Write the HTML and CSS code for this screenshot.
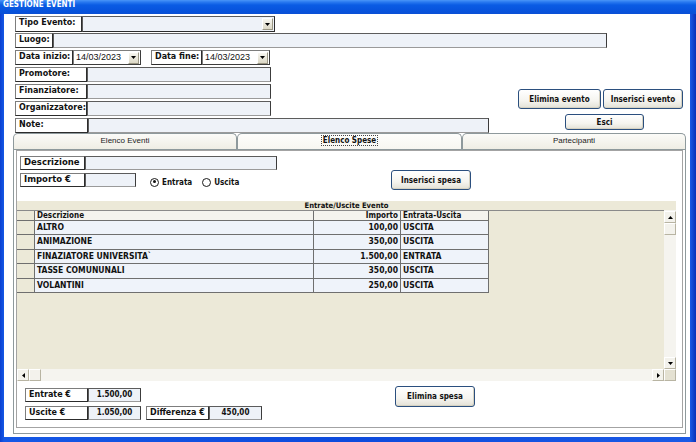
FILE: index.html
```html
<!DOCTYPE html>
<html lang="it">
<head>
<meta charset="utf-8">
<title>Gestione Eventi</title>
<link rel="stylesheet" href="styles.css">
</head>
<body>
<div class="window">
  <div class="titlebar">GESTIONE EVENTI</div>
  <div class="client">
    <div class="top">
      <div class="row row-first">
        <div class="lbl w67">Tipo Evento:</div>
        <div class="combo w193"><span class="arr"><svg width="5" height="3" viewBox="0 0 5 3"><path d="M0 0H5L2.5 3Z" fill="#000"/></svg></span></div>
      </div>
      <div class="row">
        <div class="lbl w38">Luogo:</div>
        <div class="inp w554"></div>
      </div>
      <div class="row">
        <div class="lbl w58">Data inizio:</div>
        <div class="date"><span class="dtxt">14/03/2023</span><span class="arr"><svg width="5" height="3" viewBox="0 0 5 3"><path d="M0 0H5L2.5 3Z" fill="#000"/></svg></span></div>
        <div class="lbl w51 gap10">Data fine:</div>
        <div class="date"><span class="dtxt">14/03/2023</span><span class="arr"><svg width="5" height="3" viewBox="0 0 5 3"><path d="M0 0H5L2.5 3Z" fill="#000"/></svg></span></div>
      </div>
      <div class="lower">
        <div class="lcol">
          <div class="row"><div class="lbl w72">Promotore:</div><div class="inp w184"></div></div>
          <div class="row"><div class="lbl w72">Finanziatore:</div><div class="inp w184"></div></div>
          <div class="row"><div class="lbl w72">Organizzatore:</div><div class="inp w184"></div></div>
          <div class="row"><div class="lbl w73">Note:</div><div class="inp w401"></div></div>
        </div>
        <div class="btncol">
          <div class="btnrow">
            <button class="btn b-elim">Elimina evento</button>
            <button class="btn b-ins">Inserisci evento</button>
          </div>
          <button class="btn b-esci">Esci</button>
        </div>
      </div>
    </div>

    <div class="tabs">
      <div class="tab">Elenco Eventi</div>
      <div class="tab sel"><span class="focus">Elenco Spese</span></div>
      <div class="tab">Partecipanti</div>
    </div>
    <div class="panel">
      <div class="inner">
        <div class="sform">
          <div class="scol">
            <div class="srow"><div class="lbl w65">Descrizione</div><div class="inp w192"></div></div>
            <div class="srow">
              <div class="lbl w65">Importo €</div><div class="inp w51"></div>
              <span class="radio on"></span><span class="rtxt">Entrata</span>
              <span class="radio"></span><span class="rtxt">Uscita</span>
            </div>
          </div>
          <button class="btn b-inssp">Inserisci spesa</button>
        </div>

        <div class="grid">
          <div class="gcap">Entrate/Uscite Evento</div>
          <div class="gbody">
            <div class="gtable">
              <div class="grow ghead">
                <div class="c ind"></div><div class="c cd">Descrizione</div><div class="c ci">Importo</div><div class="c ce">Entrata-Uscita</div>
              </div>
              <div class="grow"><div class="c ind"></div><div class="c cd">ALTRO</div><div class="c ci">100,00</div><div class="c ce">USCITA</div></div>
              <div class="grow"><div class="c ind"></div><div class="c cd">ANIMAZIONE</div><div class="c ci">350,00</div><div class="c ce">USCITA</div></div>
              <div class="grow"><div class="c ind"></div><div class="c cd">FINAZIATORE UNIVERSITA`</div><div class="c ci">1.500,00</div><div class="c ce">ENTRATA</div></div>
              <div class="grow"><div class="c ind"></div><div class="c cd">TASSE COMUNUNALI</div><div class="c ci">350,00</div><div class="c ce">USCITA</div></div>
              <div class="grow"><div class="c ind"></div><div class="c cd">VOLANTINI</div><div class="c ci">250,00</div><div class="c ce">USCITA</div></div>
            </div>
            <div class="vscroll">
              <span class="sbtn"><svg width="5" height="3" viewBox="0 0 5 3"><path d="M0 3H5L2.5 0Z" fill="#000"/></svg></span>
              <span class="sthumb"></span>
              <span class="vfill"></span>
              <span class="sbtn"><svg width="5" height="3" viewBox="0 0 5 3"><path d="M0 0H5L2.5 3Z" fill="#000"/></svg></span>
            </div>
          </div>
          <div class="hbar">
            <div class="hscroll">
              <span class="sbtn"><svg width="3" height="5" viewBox="0 0 3 5"><path d="M3 0V5L0 2.5Z" fill="#000"/></svg></span>
              <span class="sthumb"></span>
              <span class="hfill"></span>
              <span class="sbtn"><svg width="3" height="5" viewBox="0 0 3 5"><path d="M0 0V5L3 2.5Z" fill="#000"/></svg></span>
            </div>
            <div class="corner"></div>
          </div>
        </div>

        <div class="totals">
          <div class="tcol">
            <div class="srow"><div class="lbl w63">Entrate €</div><div class="val w53">1.500,00</div></div>
            <div class="srow">
              <div class="lbl w63">Uscite €</div><div class="val w53">1.050,00</div>
              <div class="lbl w63 ml5">Differenza €</div><div class="val w53">450,00</div>
            </div>
          </div>
          <button class="btn b-elsp">Elimina spesa</button>
        </div>
      </div>
    </div>
  </div>
</div>
</body>
</html>
```
FILE: styles.css
```css
* { box-sizing: border-box; }
html, body { margin: 0; padding: 0; }
body { width: 696px; height: 442px; overflow: hidden; font-family: "DejaVu Sans", sans-serif; background: #fff; }

.window {
  width: 696px; height: 442px;
  display: flex; flex-direction: column;
  background: linear-gradient(90deg, #0b3fd0 0, #1558e6 4px, #0d4bdd 50%, #1a5ae6 690px, #0831b8 696px);
}
.titlebar {
  height: 14px; line-height: 14px; padding-left: 3px;
  color: #fff; font: bold 8px "DejaVu Sans Condensed", "DejaVu Sans", sans-serif;
  background: linear-gradient(#4a96f8 0, #2a7af0 2px, #0a5ce4 5px, #0753dc 11px, #0a4fd5 14px);
}
.client {
  flex: 1; margin: 0 6px 5px 4px; background: #fff;
  display: flex; flex-direction: column;
}

/* top form */
.top { padding: 2px 0 0 11px; display: flex; flex-direction: column; gap: 2px; }
.row { display: flex; height: 15px; }
.row-first { height: 16px; margin-bottom: -1px; }
.lower { display: flex; }
.lcol { display: flex; flex-direction: column; gap: 2px; }
.btncol { margin-left: 29px; padding-top: 22px; display: flex; flex-direction: column; }
.btnrow { display: flex; gap: 2px; }

.lbl {
  background: #fff;
  border: 1px solid; border-color: #7d7d7d #2c2c2c #2c2c2c #7d7d7d;
  font: bold 8px "DejaVu Sans", sans-serif; color: #111;
  padding: 0 0 0 3px; line-height: 12px; white-space: nowrap; overflow: hidden;
}
.inp {
  background: #eef2f8;
  border: 1px solid; border-color: #5c5c5c #3c3c3c #9a9a9a #5c5c5c;
}
.w38 { width: 38px; } .w51 { width: 51px; } .w53 { width: 53px; } .w58 { width: 58px; }
.w63 { width: 63px; } .w65 { width: 65px; } .w67 { width: 67px; } .w72 { width: 72px; }
.w73 { width: 73px; } .w184 { width: 184px; } .w192 { width: 192px; } .w193 { width: 193px; }
.w401 { width: 401px; } .w554 { width: 554px; }
.gap10 { margin-left: 10px; }
.ml5 { margin-left: 5px; }

.combo {
  background: #eef2f8; border: 1px solid; border-color: #5c5c5c #2c2c2c #2c2c2c #5c5c5c;
  display: flex; justify-content: flex-end; align-items: center; padding-right: 1px;
}
.arr {
  width: 11px; height: 12px; display: flex; align-items: center; justify-content: center;
  background: linear-gradient(#f7f6f0, #dcd8c6);
  border: 1px solid; border-color: #fff #9a9684 #9a9684 #fff;
}
.date {
  width: 68px; display: flex; align-items: center;
  background: #fff; border: 1px solid; border-color: #7d7d7d #3c3c3c #3c3c3c #7d7d7d;
  padding: 0 1px 0 2px;
}
.dtxt { flex: 1; font: 9px "Liberation Sans", Arial, sans-serif; color: #111; line-height: 13px; }

.btn {
  font: bold 8px "DejaVu Sans Condensed", "DejaVu Sans", sans-serif; color: #111;
  border: 1px solid #2b4f7e; border-radius: 3px;
  background: linear-gradient(#ffffff 0, #f5f4ef 60%, #e3e1d6 100%);
  box-shadow: inset -1px -1px 0 #d6d2c2;
  padding: 0; margin: 0; cursor: default;
}
.b-elim { width: 83px; height: 20px; }
.b-ins { width: 80px; height: 20px; }
.b-esci { width: 79px; height: 16px; margin: 5px 0 0 47px; }
.b-inssp { width: 80px; height: 20px; margin: 14px 0 0 114px; }
.b-elsp { width: 80px; height: 21px; margin: -2px 0 0 133px; }

/* tabs */
.tabs { display: flex; margin-left: 9px; width: 673px; height: 16px; }
.tab {
  flex: 0 0 224px; height: 16px;
  border: 1px solid #8e999c; border-bottom: none; border-radius: 5px 5px 0 0;
  background: linear-gradient(#fbfbf8, #efede4);
  font: 8px "Liberation Sans", Arial, sans-serif; color: #222;
  text-align: center; line-height: 14px;
}
.tab.sel { flex-basis: 225px; background: linear-gradient(#fefefc, #f7f6f1); }
.focus {
  font: bold 8px "DejaVu Sans Condensed", "DejaVu Sans", sans-serif; color: #111;
  outline: 1px dotted #444; outline-offset: 0; padding: 0 1px;
}

/* panel */
.panel {
  margin-left: 9px; width: 673px; height: 285px;
  border: 1px solid #8e999c; padding: 0 2px 5px 2px; background: #fff;
}
.inner { height: 100%; border: 1px solid #a3a3a3; }

.sform { display: flex; padding: 5px 0 0 3px; }
.scol { display: flex; flex-direction: column; gap: 3px; width: 257px; }
.srow { display: flex; height: 14px; align-items: stretch; }
.srow .lbl { font-size: 8.5px; line-height: 11px; }
.radio {
  width: 9px; height: 9px; border-radius: 50%; border: 1.5px solid #1a1a1a; background: #fff;
  align-self: center; margin-left: 14px; margin-top: 4px; position: relative;
}
.radio + .rtxt { margin-left: 3px; }
.radio.on::after {
  content: ""; position: absolute; left: 1.5px; top: 1.5px; width: 3px; height: 3px;
  border-radius: 50%; background: #111;
}
.rtxt { font: bold 8px "DejaVu Sans Condensed", "DejaVu Sans", sans-serif; color: #111; align-self: center; margin-top: 4px; }
.rtxt + .radio { margin-left: 10px; }

/* grid */
.grid {
  width: 659px; height: 180px; margin-top: 11px;
  background: #ece9d8; display: flex; flex-direction: column;
}
.gcap {
  height: 9px; line-height: 9px; text-align: center;
  font: bold 7.6px "DejaVu Sans Condensed", "DejaVu Sans", sans-serif; color: #111;
}
.gbody { flex: 1; display: flex; min-height: 0; }
.gtable { flex: 1; border-top: 1px solid #8a8a8a; }
.grow { display: flex; height: 14.4px; }
.grow.ghead { height: 10px; }
.c {
  border-right: 1px solid #6f6f6f; border-bottom: 1px solid #6f6f6f;
  font: bold 8.5px "DejaVu Sans Condensed", "DejaVu Sans", sans-serif; color: #111;
  background: #eff3fa; padding: 0 2px; line-height: 12px; white-space: nowrap; overflow: hidden;
}
.ghead .c { background: #f4f3ee; line-height: 9px; font-size: 8px; }
.c.ind { width: 18px; background: #ece9d8; }
.c.cd { width: 279px; }
.c.ci { width: 87px; text-align: right; }
.c.ce { width: 88px; }

.vscroll { width: 12px; display: flex; flex-direction: column; background: #f5f4ef; padding-top: 1px; }
.sbtn {
  width: 12px; height: 12px; display: flex; align-items: center; justify-content: center;
  background: #f3f2ec; border: 1px solid; border-color: #fff #b8b4a2 #b8b4a2 #fff;
}
.sthumb { width: 12px; height: 12px; background: #f3f2ec; border: 1px solid; border-color: #fff #b8b4a2 #b8b4a2 #fff; }
.vfill { flex: 1; }
.hbar { height: 12px; display: flex; }
.hscroll { flex: 1; display: flex; background: #f5f4ef; }
.hfill { flex: 1; }
.corner { width: 12px; background: #e4e1d2; border: 1px solid; border-color: #fff #b8b4a2 #b8b4a2 #fff; }

/* totals */
.totals { display: flex; padding: 7px 0 0 8px; }
.tcol { display: flex; flex-direction: column; gap: 4px; width: 237px; }
.tcol .lbl { font-size: 8px; }
.val {
  background: #eef2f8; border: 1px solid; border-color: #5c5c5c #3c3c3c #9a9a9a #5c5c5c;
  font: bold 8px "DejaVu Sans Condensed", "DejaVu Sans", sans-serif; color: #111;
  text-align: center; line-height: 12px;
}
```
